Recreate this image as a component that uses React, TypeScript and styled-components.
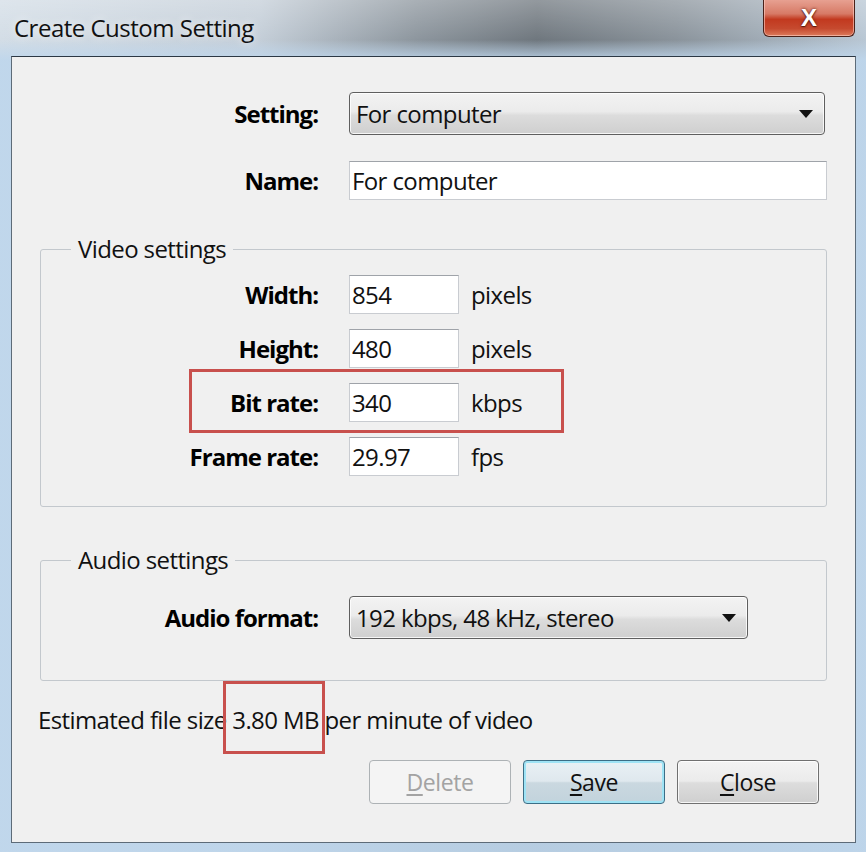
import styled, { createGlobalStyle } from 'styled-components'

const GlobalStyle = createGlobalStyle`
  html, body {
    margin: 0;
    padding: 0;
    background: #bcd2e8;
  }
  body {
    font-family: "Open Sans", "Noto Sans", "Liberation Sans", sans-serif;
    color: #000;
  }
`

const videoRows = [
  { label: 'Width:', value: '854', unit: 'pixels' },
  { label: 'Height:', value: '480', unit: 'pixels' },
  { label: 'Bit rate:', value: '340', unit: 'kbps', highlight: true },
  { label: 'Frame rate:', value: '29.97', unit: 'fps' },
]

const Caret = () => (
  <svg width="16" height="10" viewBox="0 0 16 10">
    <path d="M1 1 L15 1 L8 9 Z" fill="#111" />
  </svg>
)

const App: React.FC = () => {
  return (
    <>
      <GlobalStyle />
      <Window>
        <TitleBar>
          <Title>Create Custom Setting</Title>
          <CloseButton>X</CloseButton>
        </TitleBar>
        <Client>
          <Row>
            <Label $width={278}>Setting:</Label>
            <Select $width={476}>
              <span>For computer</span>
              <Caret />
            </Select>
          </Row>
          <Row>
            <Label $width={278}>Name:</Label>
            <TextBox $width={480}>For computer</TextBox>
          </Row>

          <Group $top={34}>
            <Legend>Video settings</Legend>
            <GroupBody $padTop={11} $padBottom={30}>
              {videoRows.map((r) => (
                <Row key={r.label} $highlight={r.highlight}>
                  <Label $width={277}>{r.label}</Label>
                  <TextBox $width={110}>{r.value}</TextBox>
                  <Unit>{r.unit}</Unit>
                </Row>
              ))}
            </GroupBody>
          </Group>

          <Group $top={38}>
            <Legend>Audio settings</Legend>
            <GroupBody $padTop={21} $padBottom={41}>
              <Row>
                <Label $width={277}>Audio format:</Label>
                <Select $width={399}>
                  <span>192 kbps, 48 kHz, stereo</span>
                  <Caret />
                </Select>
              </Row>
            </GroupBody>
          </Group>

          <Estimate>
            Estimated file size <Marked>3.80 MB</Marked> per minute of video
          </Estimate>

          <Buttons>
            <Button $kind="disabled">
              <u>D</u>elete
            </Button>
            <Button $kind="default">
              <u>S</u>ave
            </Button>
            <Button>
              <u>C</u>lose
            </Button>
          </Buttons>
        </Client>
      </Window>
    </>
  )
}

export default App

const Window = styled.div`
  width: 866px;
  height: 852px;
  display: flex;
  flex-direction: column;
  box-sizing: border-box;
  background:
    linear-gradient(180deg, rgba(255, 255, 255, 0.25) 0px, rgba(255, 255, 255, 0) 40px, rgba(190, 214, 236, 0.9) 60px),
    linear-gradient(90deg, #d3dde6 0%, #c4ced8 30%, #8d969e 48%, #6f777e 62%, #8a939b 78%, #b9c7d4 100%);
  background-color: #bdd4ea;
`

const TitleBar = styled.div`
  height: 56px;
  display: flex;
  align-items: flex-start;
  justify-content: space-between;
  padding: 0 11px 0 14px;
  box-sizing: border-box;
`

const Title = styled.div`
  margin-top: 11px;
  font-size: 24px;
  letter-spacing: -0.5px;
  color: #111;
  text-shadow: 0 0 8px rgba(255, 255, 255, 0.9);
`

const CloseButton = styled.div`
  width: 92px;
  height: 38px;
  margin-top: -1px;
  box-sizing: border-box;
  border: 1px solid #4a2119;
  border-top: none;
  border-radius: 0 0 6px 6px;
  background: linear-gradient(180deg, #e8a394 0%, #d77a66 40%, #c2391f 55%, #c64a2f 80%, #dc7b5c 100%);
  box-shadow: inset 0 0 0 1px rgba(255, 210, 200, 0.6);
  display: flex;
  align-items: center;
  justify-content: center;
  color: #fff;
  font-family: "Liberation Sans", sans-serif;
  font-weight: 700;
  font-size: 24px;
  text-shadow: 0 0 3px #5a1a10, 0 1px 1px #5a1a10;
`

const Client = styled.div`
  flex: 1;
  margin: 0 10px 9px 11px;
  border: 1px solid #5d6b78;
  border-top-color: #2c3844;
  background: #f0f0f0;
  padding: 35px 28px 0 28px;
  display: flex;
  flex-direction: column;
  gap: 26px;
  box-sizing: border-box;
`

const Row = styled.div<{ $highlight?: boolean }>`
  position: relative;
  display: flex;
  align-items: center;
  gap: 31px;

  ${({ $highlight }) =>
    $highlight &&
    `
    &::before {
      content: '';
      position: absolute;
      left: 148px;
      top: -14px;
      width: 375px;
      height: 64px;
      box-sizing: border-box;
      border: 3px solid #c8504d;
      pointer-events: none;
    }
  `}
`

const Label = styled.div<{ $width: number }>`
  width: ${({ $width }) => $width}px;
  flex: none;
  text-align: right;
  font-weight: 700;
  font-size: 24px;
  letter-spacing: -1px;
`

const fieldText = `
  font-size: 24px;
  letter-spacing: -0.6px;
  color: #111;
`

const Select = styled.div<{ $width: number }>`
  width: ${({ $width }) => $width}px;
  height: 43px;
  box-sizing: border-box;
  border: 1px solid #5f5f5f;
  border-radius: 4px;
  background: linear-gradient(180deg, #f3f3f3 0%, #ebebeb 45%, #dcdcdc 55%, #cfcfcf 100%);
  box-shadow: inset 0 0 0 1px rgba(255, 255, 255, 0.8);
  display: flex;
  align-items: center;
  justify-content: space-between;
  padding: 0 10px 0 6px;
  ${fieldText}
`

const TextBox = styled.div<{ $width: number }>`
  width: ${({ $width }) => $width}px;
  height: 39px;
  box-sizing: border-box;
  border: 1px solid #c9ccd1;
  border-top-color: #9fa3a9;
  background: #fff;
  display: flex;
  align-items: center;
  padding: 0 2px;
  ${fieldText}
`

const Unit = styled.div`
  margin-left: -19px;
  ${fieldText}
`

const Group = styled.fieldset<{ $top: number }>`
  margin: ${({ $top }) => $top - 26}px 0 0 0;
  padding: 0;
  border: 1px solid #c3c8cd;
  border-radius: 3px;
  min-width: 0;
`

const Legend = styled.legend`
  margin-left: 30px;
  padding: 0 7px;
  line-height: 30px;
  ${fieldText}
`

const GroupBody = styled.div<{ $padTop: number; $padBottom: number }>`
  display: flex;
  flex-direction: column;
  gap: 15px;
  padding: ${({ $padTop, $padBottom }) => `${$padTop}px 0 ${$padBottom}px 0`};
`

const Estimate = styled.div`
  margin-top: -2px;
  margin-left: -2px;
  line-height: 30px;
  ${fieldText}
`

const Marked = styled.span`
  position: relative;

  &::after {
    content: '';
    position: absolute;
    left: -9px;
    right: -6px;
    top: -22px;
    bottom: -18px;
    border: 3px solid #c8504d;
  }
`

const Buttons = styled.div`
  display: flex;
  justify-content: flex-end;
  gap: 12px;
  margin-top: -1px;
  padding-right: 8px;
`

const Button = styled.div<{ $kind?: 'disabled' | 'default' }>`
  width: 142px;
  height: 44px;
  box-sizing: border-box;
  border-radius: 4px;
  display: flex;
  align-items: center;
  justify-content: center;
  font-size: 23px;
  letter-spacing: -0.4px;
  border: 1px solid
    ${({ $kind }) => ($kind === 'disabled' ? '#adb2b5' : $kind === 'default' ? '#3c6e86' : '#707070')};
  color: ${({ $kind }) => ($kind === 'disabled' ? '#a3a3a3' : '#111')};
  background: ${({ $kind }) =>
    $kind === 'disabled'
      ? '#f4f4f4'
      : $kind === 'default'
        ? 'linear-gradient(180deg, #e9f1f5 0%, #dfe8ee 48%, #cad8e0 52%, #c2d3dc 100%)'
        : 'linear-gradient(180deg, #f3f3f3 0%, #ebebeb 48%, #dddddd 52%, #cfcfcf 100%)'};
  box-shadow: ${({ $kind }) =>
    $kind === 'default'
      ? 'inset 0 0 0 2px #9fe3f5'
      : $kind === 'disabled'
        ? 'none'
        : 'inset 0 0 0 1px rgba(255,255,255,0.8)'};

  u {
    text-underline-offset: 3px;
  }
`
